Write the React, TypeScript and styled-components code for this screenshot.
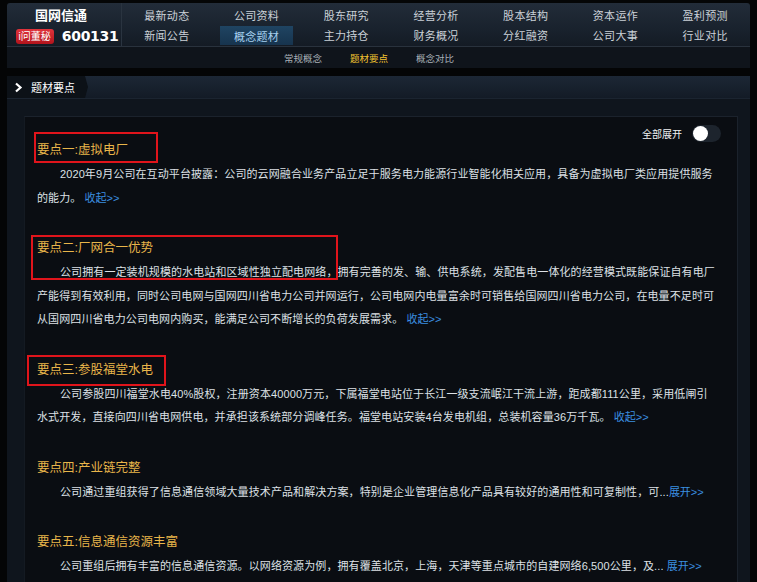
import styled, { createGlobalStyle } from "styled-components";

const GlobalStyle = createGlobalStyle`
  html, body {
    margin: 0;
    padding: 0;
    background: #040506;
  }
  body {
    font-family: "Liberation Sans", "Noto Sans CJK SC", sans-serif;
  }
`;

const navRows = [
  ["最新动态", "公司资料", "股东研究", "经营分析", "股本结构", "资本运作", "盈利预测"],
  ["新闻公告", "概念题材", "主力持仓", "财务概况", "分红融资", "公司大事", "行业对比"],
];

const subNav = ["常规概念", "题材要点", "概念对比"];

type Mark = { x: number; y: number; w: number; h: number };

type Point = {
  title: string;
  lines: string[];
  action: string;
  gap?: boolean;
  mark?: Mark;
};

const points: Point[] = [
  {
    title: "要点一:虚拟电厂",
    lines: [
      "2020年9月公司在互动平台披露：公司的云网融合业务产品立足于服务电力能源行业智能化相关应用，具备为虚拟电厂类应用提供服务",
      "的能力。",
    ],
    action: "收起>>",
    gap: true,
    mark: { x: -3, y: -6, w: 124, h: 31 },
  },
  {
    title: "要点二:厂网合一优势",
    lines: [
      "公司拥有一定装机规模的水电站和区域性独立配电网络，拥有完善的发、输、供电系统，发配售电一体化的经营模式既能保证自有电厂",
      "产能得到有效利用，同时公司电网与国网四川省电力公司并网运行，公司电网内电量富余时可销售给国网四川省电力公司，在电量不足时可",
      "从国网四川省电力公司电网内购买，能满足公司不断增长的负荷发展需求。",
    ],
    action: "收起>>",
    gap: true,
    mark: { x: -6, y: -1, w: 307, h: 45 },
  },
  {
    title: "要点三:参股福堂水电",
    lines: [
      "公司参股四川福堂水电40%股权，注册资本40000万元，下属福堂电站位于长江一级支流岷江干流上游，距成都111公里，采用低闸引",
      "水式开发，直接向四川省电网供电，并承担该系统部分调峰任务。福堂电站安装4台发电机组，总装机容量36万千瓦。",
    ],
    action: "收起>>",
    gap: true,
    mark: { x: -10, y: -3, w: 139, h: 31 },
  },
  {
    title: "要点四:产业链完整",
    lines: [
      "公司通过重组获得了信息通信领域大量技术产品和解决方案，特别是企业管理信息化产品具有较好的通用性和可复制性，可...",
    ],
    action: "展开>>",
  },
  {
    title: "要点五:信息通信资源丰富",
    lines: [
      "公司重组后拥有丰富的信息通信资源。以网络资源为例，拥有覆盖北京，上海，天津等重点城市的自建网络6,500公里，及...",
    ],
    action: "展开>>",
    gap: true,
  },
];

export default function App() {
  return (
    <Page>
      <GlobalStyle />
      <Header>
        <TopArea>
          <Brand>
            <BrandName>国网信通</BrandName>
            <BrandCode>
              <Badge>i问董秘</Badge>
              <Code>600131</Code>
            </BrandCode>
          </Brand>
          <NavGrid>
            {navRows.flat().map((label) => (
              <NavCell key={label} $active={label === "概念题材"}>
                {label}
              </NavCell>
            ))}
          </NavGrid>
        </TopArea>
        <SubNav>
          {subNav.map((label) => (
            <SubItem key={label} $active={label === "题材要点"}>
              {label}
            </SubItem>
          ))}
        </SubNav>
      </Header>

      <Panel>
        <PanelHead>
          <Tab>
            <svg width="9" height="11" viewBox="0 0 9 11">
              <path d="M2 1.5 L6.5 5.5 L2 9.5" fill="none" stroke="#ffffff" strokeWidth="2.2" />
            </svg>
            <span>题材要点</span>
          </Tab>
        </PanelHead>
        <PanelBody>
          <Content>
            <ToggleRow>
              <ToggleLabel>全部展开</ToggleLabel>
              <Track>
                <Knob />
              </Track>
            </ToggleRow>
            {points.map((p) => (
              <Item key={p.title}>
                {p.mark && (
                  <RedMark
                    style={{ left: p.mark.x, top: p.mark.y, width: p.mark.w, height: p.mark.h }}
                  />
                )}
                <ItemTitle>{p.title}</ItemTitle>
                {p.lines.map((line, i) => (
                  <Line key={i} $first={i === 0}>
                    {line}
                    {i === p.lines.length - 1 && (
                      <>
                        {p.gap ? " " : ""}
                        <Action>{p.action}</Action>
                      </>
                    )}
                  </Line>
                ))}
              </Item>
            ))}
          </Content>
        </PanelBody>
      </Panel>
    </Page>
  );
}

const Page = styled.div`
  width: 757px;
  height: 582px;
  overflow: hidden;
  padding: 3px 7px 0 7px;
  box-sizing: border-box;
  background: #040506;
`;

const Header = styled.div`
  height: 65px;
  border-radius: 3px 3px 0 0;
  background: linear-gradient(to bottom, #222c39 0%, #19222d 40%, #131a23 70%);
  overflow: hidden;
`;

const TopArea = styled.div`
  display: flex;
  height: 43px;
`;

const Brand = styled.div`
  width: 115px;
  display: flex;
  flex-direction: column;
  align-items: center;
  padding-top: 3px;
  border-right: 1px solid #2a3440;
  box-sizing: border-box;
`;

const BrandName = styled.div`
  color: #ffffff;
  font-weight: bold;
  font-size: 13px;
  line-height: 20px;
  padding-right: 6px;
`;

const BrandCode = styled.div`
  display: flex;
  align-items: center;
  gap: 8px;
  height: 20px;
  padding-left: 6px;
`;

const Badge = styled.span`
  background: linear-gradient(to bottom, #e0343c, #b3141c);
  color: #ffffff;
  font-size: 10px;
  line-height: 15px;
  padding: 0 3px;
  border-radius: 3px;
`;

const Code = styled.span`
  color: #ffffff;
  font-weight: bold;
  font-size: 14px;
  font-family: "DejaVu Sans", "Liberation Sans", sans-serif;
  letter-spacing: -0.3px;
`;

const NavGrid = styled.div`
  flex: 1;
  display: grid;
  grid-template-columns: repeat(7, 1fr);
  grid-template-rows: 20px 20px;
  padding-top: 2px;
  padding-bottom: 1px;
`;

const NavCell = styled.div<{ $active?: boolean }>`
  justify-self: center;
  width: 73px;
  display: flex;
  align-items: center;
  justify-content: center;
  font-size: 11px;
  letter-spacing: 0.3px;
  color: ${(p) => (p.$active ? "#a8d2f0" : "#cbd1d8")};
  background: ${(p) => (p.$active ? "linear-gradient(to bottom, #1f4462, #17344e)" : "transparent")};
  margin-top: ${(p) => (p.$active ? "1px" : "0")};
`;

const SubNav = styled.div`
  height: 21px;
  border-top: 1px solid #29323d;
  background: #0f141b;
  display: flex;
  align-items: center;
  gap: 28px;
  padding-left: 277px;
`;

const SubItem = styled.span<{ $active?: boolean }>`
  font-size: 9.5px;
  color: ${(p) => (p.$active ? "#f2c330" : "#a9b0b8")};
`;

const Panel = styled.div`
  margin-top: 8px;
  height: 520px;
  background: #0f151d;
  border-radius: 2px 2px 0 0;
`;

const PanelHead = styled.div`
  height: 22px;
  display: flex;
  background: linear-gradient(to bottom, #1c2735, #131b26);
  border-bottom: 1px solid #1b2430;
`;

const Tab = styled.div`
  width: 81px;
  display: flex;
  align-items: center;
  gap: 8px;
  padding-left: 7px;
  box-sizing: border-box;
  background: #0c1117;
  clip-path: polygon(0 0, 78px 0, 81px 50%, 78px 100%, 0 100%);
  color: #ffffff;
  font-size: 11px;
`;

const PanelBody = styled.div`
  padding: 17px 12px 0 17px;
`;

const Content = styled.div`
  height: 480px;
  background: #0a0d12;
  border-top: 1px solid #1b222c;
  border-left: 1px solid #141a22;
  border-right: 1px solid #1b222c;
  padding: 0 20px 0 12px;
`;

const ToggleRow = styled.div`
  height: 21px;
  display: flex;
  justify-content: flex-end;
  align-items: flex-start;
  gap: 10px;
  padding-top: 8px;
  box-sizing: border-box;
  margin-right: -4px;
`;

const ToggleLabel = styled.span`
  font-size: 10px;
  line-height: 17px;
  color: #f0f2f4;
  padding-top: 1px;
`;

const Track = styled.div`
  width: 29px;
  height: 17px;
  border-radius: 9px;
  background: #1d242d;
  display: flex;
  align-items: center;
  padding-left: 1px;
  box-sizing: border-box;
`;

const Knob = styled.div`
  width: 15px;
  height: 15px;
  border-radius: 50%;
  background: #ffffff;
`;

const Item = styled.div`
  position: relative;
  margin-bottom: 26px;
`;

const RedMark = styled.div`
  position: absolute;
  border: 2px solid #e0141b;
  box-sizing: border-box;
  pointer-events: none;
`;

const ItemTitle = styled.div`
  color: #e8b54a;
  font-size: 12.5px;
  line-height: 24px;
  margin-bottom: 1px;
`;

const Line = styled.div<{ $first?: boolean }>`
  color: #dde1e6;
  font-size: 11px;
  letter-spacing: 0.1px;
  line-height: 23.5px;
  white-space: nowrap;
  text-indent: ${(p) => (p.$first ? "23px" : "0")};
`;

const Action = styled.span`
  color: #3b8fe0;
  letter-spacing: 0;
`;
